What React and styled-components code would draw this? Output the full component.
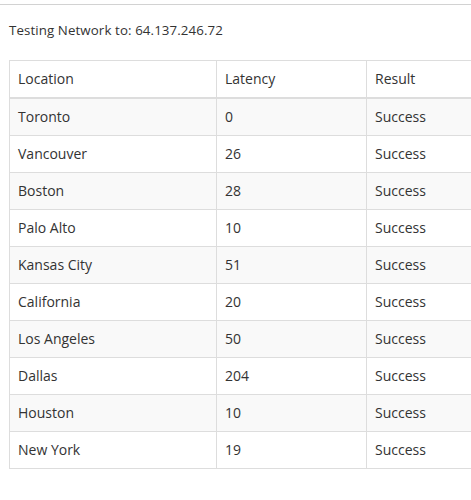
import React from 'react'
import styled, { createGlobalStyle } from 'styled-components'

const GlobalStyle = createGlobalStyle`
    body {
        margin: 0;
        overflow: hidden;
        background: #fff;
        font-family: "Open Sans", "Liberation Sans", sans-serif;
        font-size: 14px;
        color: #333;
    }
`

const rows = [
    ['Toronto', '0', 'Success'],
    ['Vancouver', '26', 'Success'],
    ['Boston', '28', 'Success'],
    ['Palo Alto', '10', 'Success'],
    ['Kansas City', '51', 'Success'],
    ['California', '20', 'Success'],
    ['Los Angeles', '50', 'Success'],
    ['Dallas', '204', 'Success'],
    ['Houston', '10', 'Success'],
    ['New York', '19', 'Success'],
]

const App = () => {
    return (
        <>
            <GlobalStyle />
            <Panel>
                <Title>Testing Network to: 64.137.246.72</Title>
                <TableClip>
                    <Table>
                        <thead>
                            <tr>
                                <Th width={207}>Location</Th>
                                <Th width={150}>Latency</Th>
                                <Th>Result</Th>
                            </tr>
                        </thead>
                        <tbody>
                            {rows.map(([loc, lat, res], i) => (
                                <Row key={loc} striped={i % 2 === 0 ? 1 : 0}>
                                    <Td>{loc}</Td>
                                    <Td>{lat}</Td>
                                    <Td>{res}</Td>
                                </Row>
                            ))}
                        </tbody>
                    </Table>
                </TableClip>
            </Panel>
        </>
    )
}

export default App

// Styled Components
const Panel = styled.section`
    margin-top: 4px;
    border-top: 1px solid #d2d2d2;
    padding: 15px 0 0 9px;
`
const Title = styled.p`
    margin: 0 0 20px 0;
    line-height: 20px;
    font-size: 13.3px;
    letter-spacing: 0.1px;
`
const TableClip = styled.div`
    width: 462px;
    overflow: hidden;
`
const Table = styled.table`
    width: 600px;
    border-collapse: collapse;
    border-spacing: 0;
    border: 1px solid #ddd;
`
const Th = styled.th`
    width: ${({ width }) => width ? `${width}px` : 'auto'};
    text-align: left;
    font-weight: normal;
    padding: 8px;
    line-height: 20px;
    border: 1px solid #ddd;
    border-bottom: 2px solid #ddd;
    box-sizing: border-box;
`
const Row = styled.tr`
    background-color: ${({ striped }) => striped ? '#f9f9f9' : '#fff'};
`
const Td = styled.td`
    padding: 8px;
    line-height: 20px;
    border: 1px solid #ddd;
`
